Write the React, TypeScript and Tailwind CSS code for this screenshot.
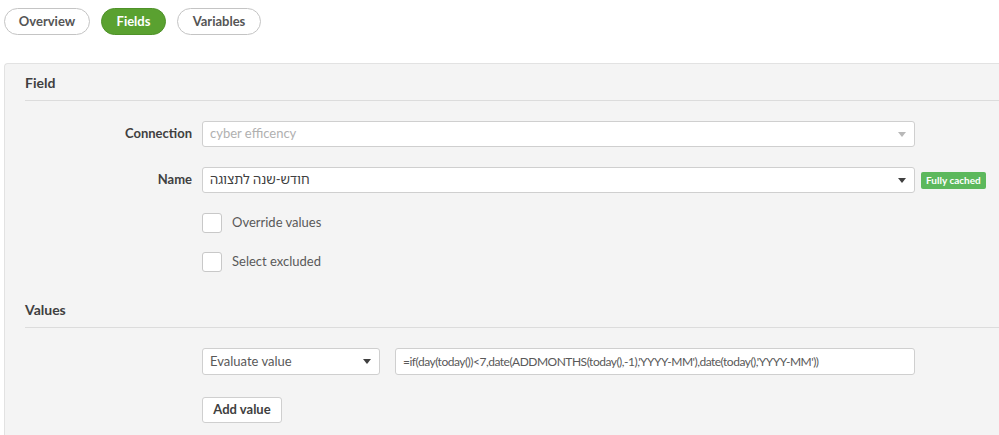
import React from 'react';

const font = { fontFamily: 'Lato, "Noto Sans", "Noto Sans Hebrew", sans-serif' };

const Caret = ({ color }: { color: string }) => (
  <svg width="8" height="5" viewBox="0 0 8 5" className="shrink-0">
    <path d="M0 0 L8 0 L4 5 Z" fill={color} />
  </svg>
);

const Checkbox = ({ label }: { label: string }) => (
  <label className="flex items-center gap-[10px] h-5">
    <span className="w-5 h-5 rounded-[3px] border border-[#c8c8c8] bg-white" />
    <span className="text-[13px] text-[#595959]">{label}</span>
  </label>
);

const SectionHeader = ({ title }: { title: string }) => (
  <div className="ml-5 h-[37px] flex items-center border-b border-[#dcdcdc]">
    <span className="text-[14px] font-bold text-[#404040]">{title}</span>
  </div>
);

export default function App() {
  const tabs = [
    { label: 'Overview', w: 'w-[86px]' },
    { label: 'Fields', w: 'w-[65px]' },
    { label: 'Variables', w: 'w-[84px]' },
  ];
  return (
    <div className="w-[999px] h-[435px] overflow-hidden bg-white" style={font}>
      <div className="flex gap-[11px] pl-1 pt-2">
        {tabs.map(t => (
          <button
            key={t.label}
            className={`${t.w} h-[27px] pt-px rounded-full text-[13px] font-bold border ${
              t.label === 'Fields'
                ? 'bg-[#5aa130] border-[#4f9229] text-white'
                : 'bg-white border-[#c4c4c4] text-[#555555]'
            }`}
          >
            {t.label}
          </button>
        ))}
      </div>

      <div className="mt-[28px] ml-1 w-[1020px] h-[400px] bg-[#f4f4f4] border-t border-l border-[#e2e2e2] rounded-tl-[4px]">
        <SectionHeader title="Field" />

        <div className="flex flex-col gap-5 pt-5">
          <div className="flex items-center">
            <div className="w-[197px] pr-[10px] text-right text-[13px] font-bold text-[#404040]">Connection</div>
            <div className="w-[713px] h-[26px] bg-white border border-[#cfcfcf] rounded-[3px] flex items-center justify-between pl-[7px] pr-[8px]">
              <span className="text-[13px] text-[#b0b0b0]">cyber efficency</span>
              <Caret color="#b8b8b8" />
            </div>
          </div>

          <div className="flex items-center">
            <div className="w-[197px] pr-[10px] text-right text-[13px] font-bold text-[#404040]">Name</div>
            <div className="w-[713px] h-[26px] bg-white border border-[#cfcfcf] rounded-[3px] flex items-center justify-between pl-[7px] pr-[8px]">
              <span className="text-[13px] text-[#404040]" dir="rtl">חודש-שנה לתצוגה</span>
              <Caret color="#404040" />
            </div>
            <span className="ml-[6px] h-[17px] px-[5px] flex items-center rounded-[2px] bg-[#5cb85c] text-white text-[10px] font-bold">
              Fully cached
            </span>
          </div>

          <div className="pl-[197px] flex flex-col gap-[19px]">
            <Checkbox label="Override values" />
            <Checkbox label="Select excluded" />
          </div>
        </div>

        <div className="mt-[19px]">
          <SectionHeader title="Values" />
        </div>

        <div className="pl-[197px] pt-5 flex flex-col gap-[21px]">
          <div className="flex gap-[15px]">
            <div className="w-[178px] h-[27px] bg-white border border-[#cfcfcf] rounded-[3px] flex items-center justify-between pl-[7px] pr-[8px]">
              <span className="text-[13px] text-[#595959]">Evaluate value</span>
              <Caret color="#404040" />
            </div>
            <div className="w-[520px] h-[27px] bg-white border border-[#cfcfcf] rounded-[3px] flex items-center pl-[7px]">
              <span className="text-[12px] tracking-[-0.5px] text-[#595959]">
                =if(day(today())&lt;7,date(ADDMONTHS(today(),-1),'YYYY-MM'),date(today(),'YYYY-MM'))
              </span>
            </div>
          </div>
          <div>
            <button className="w-[80px] h-[26px] bg-white border border-[#cfcfcf] rounded-[3px] text-[13px] font-bold text-[#404040]">
              Add value
            </button>
          </div>
        </div>
      </div>
    </div>
  );
}
